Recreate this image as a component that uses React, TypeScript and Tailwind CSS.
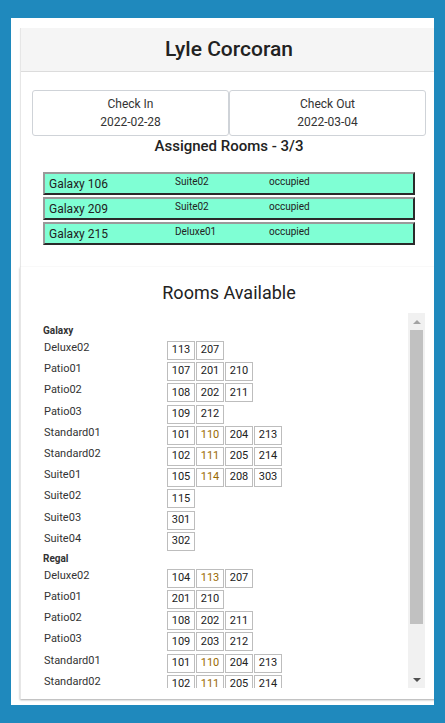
type Room = { no: string; hot?: boolean };

const assigned = [
  { name: 'Galaxy 106', type: 'Suite02', status: 'occupied' },
  { name: 'Galaxy 209', type: 'Suite02', status: 'occupied' },
  { name: 'Galaxy 215', type: 'Deluxe01', status: 'occupied' },
];

const r = (list: string): Room[] =>
  list.split(' ').map((n) => (n.endsWith('*') ? { no: n.slice(0, -1), hot: true } : { no: n }));

const hotels: { name: string; types: { name: string; rooms: Room[] }[] }[] = [
  {
    name: 'Galaxy',
    types: [
      { name: 'Deluxe02', rooms: r('113 207') },
      { name: 'Patio01', rooms: r('107 201 210') },
      { name: 'Patio02', rooms: r('108 202 211') },
      { name: 'Patio03', rooms: r('109 212') },
      { name: 'Standard01', rooms: r('101 110* 204 213') },
      { name: 'Standard02', rooms: r('102 111* 205 214') },
      { name: 'Suite01', rooms: r('105 114* 208 303') },
      { name: 'Suite02', rooms: r('115') },
      { name: 'Suite03', rooms: r('301') },
      { name: 'Suite04', rooms: r('302') },
    ],
  },
  {
    name: 'Regal',
    types: [
      { name: 'Deluxe02', rooms: r('104 113* 207') },
      { name: 'Patio01', rooms: r('201 210') },
      { name: 'Patio02', rooms: r('108 202 211') },
      { name: 'Patio03', rooms: r('109 203 212') },
      { name: 'Standard01', rooms: r('101 110* 204 213') },
      { name: 'Standard02', rooms: r('102 111* 205 214') },
      { name: 'Suite01', rooms: r('105 114* 208 303') },
      { name: 'Suite02', rooms: r('115') },
    ],
  },
];

export default function App() {
  return (
    <div
      className="min-h-[723px] w-[445px] bg-[#1f89bd] px-[11px] py-[18px]"
      style={{ fontFamily: 'Roboto, "Noto Sans", sans-serif' }}
    >
      <div className="h-[687px] overflow-hidden bg-white pl-[9px] pt-[10px]">
        {/* Guest card */}
        <div className="w-[417px] border-l border-[#e6e6e6] bg-white shadow-[0_1px_1px_rgba(0,0,0,0.08)]">
          <div className="flex h-[44px] items-center justify-center border-b border-[#dcdcdc] bg-[#f5f5f5]">
            <h1 className="text-[21px] font-medium text-[#222]">Lyle Corcoran</h1>
          </div>
          <div className="px-[11px] pb-[22px] pt-[18px]">
            <div className="flex">
              <DateBox label="Check In" value="2022-02-28" />
              <DateBox label="Check Out" value="2022-03-04" />
            </div>
            <h2 className="text-center text-[15px] font-medium leading-[20px] text-[#222]">
              Assigned Rooms - 3/3
            </h2>
            <div className="mt-[16px] flex flex-col gap-[2px] px-[11px]">
              {assigned.map((a) => (
                <div
                  key={a.name}
                  className="flex h-[23px] border-2 border-b-[#2a2a2a] border-l-[#9a9a9a] border-r-[#2a2a2a] border-t-[#9a9a9a] bg-[#7fffd4] text-[#222]"
                >
                  <div className="flex w-[130px] items-center pl-[4px] text-[12px]">{a.name}</div>
                  <div className="w-[94px] pt-[1px] text-[10px] leading-[14px]">{a.type}</div>
                  <div className="pt-[1px] text-[10px] leading-[14px]">{a.status}</div>
                </div>
              ))}
            </div>
          </div>
        </div>

        {/* Available rooms card */}
        <div className="w-[417px] border-l border-[#e6e6e6] bg-white pb-[11px] shadow-[0_1px_2px_rgba(0,0,0,0.35)]">
          <h2 className="pt-[14px] text-center text-[18px] leading-[24px] text-[#222]">Rooms Available</h2>
          <div className="mt-[8px] flex h-[375px] pl-[11px] pr-[12px]">
            <div className="flex-1 overflow-hidden pt-[11px]">
              {hotels.map((h) => (
                <div key={h.name}>
                  <div className="h-[16px] pl-[11px] text-[10px] font-bold leading-[14px] text-[#333]">
                    {h.name}
                  </div>
                  {h.types.map((t) => (
                    <div key={t.name} className="flex h-[21.2px] items-start">
                      <div className="w-[135px] pl-[12px] text-[11px] leading-[15px] text-[#333]">{t.name}</div>
                      <div className="mt-[1px] flex gap-[1px]">
                        {t.rooms.map((room) => (
                          <div
                            key={room.no}
                            className={`flex h-[19px] w-[28px] items-center justify-center border border-[#bdbdbd] text-[11px] ${
                              room.hot ? 'text-[#9a6a00]' : 'text-[#222]'
                            }`}
                          >
                            {room.no}
                          </div>
                        ))}
                      </div>
                    </div>
                  ))}
                </div>
              ))}
            </div>
            {/* scrollbar */}
            <div className="flex w-[17px] flex-col items-center bg-[#f1f1f1]">
              <div className="flex h-[17px] items-center justify-center">
                <div className="h-0 w-0 border-x-[4px] border-b-[4px] border-x-transparent border-b-[#a3a3a3]" />
              </div>
              <div className="h-[294px] w-[13px] bg-[#c1c1c1]" />
              <div className="flex-1" />
              <div className="flex h-[17px] items-center justify-center">
                <div className="h-0 w-0 border-x-[4px] border-t-[4px] border-x-transparent border-t-[#505050]" />
              </div>
            </div>
          </div>
        </div>
      </div>
    </div>
  );
}

function DateBox({ label, value }: { label: string; value: string }) {
  return (
    <div className="flex h-[46px] flex-1 flex-col items-center justify-center rounded-[3px] border border-[#cfd3d8] text-[12px] leading-[18px] text-[#333]">
      <span>{label}</span>
      <span>{value}</span>
    </div>
  );
}
